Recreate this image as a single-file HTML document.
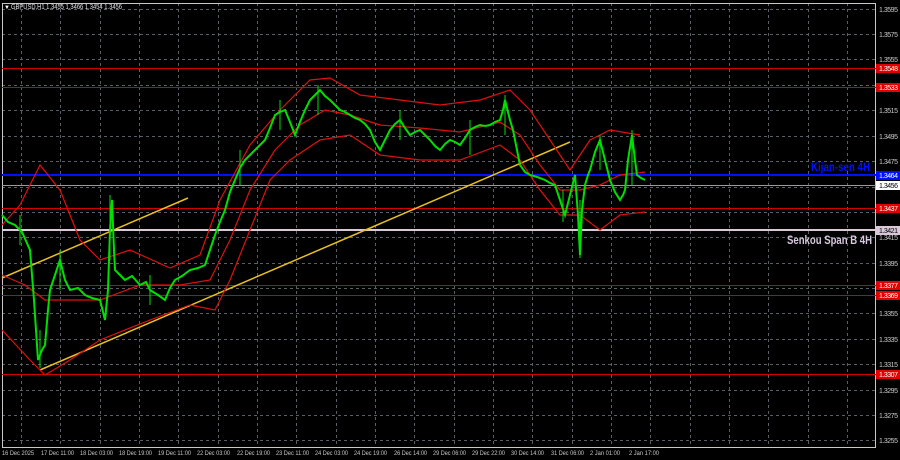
<!DOCTYPE html>
<html><head><style>
body{margin:0;background:#000;width:900px;height:460px;overflow:hidden;font-family:"Liberation Sans",sans-serif}
</style></head><body>
<svg width="900" height="460" xmlns="http://www.w3.org/2000/svg" style="position:absolute;left:0;top:0">
<rect width="900" height="460" fill="#000"/>
<g stroke="#5a5f66" stroke-width="1" stroke-dasharray="3,3">
<line x1="2" y1="9.5" x2="876" y2="9.5"/><line x1="2" y1="34.5" x2="876" y2="34.5"/><line x1="2" y1="59.5" x2="876" y2="59.5"/><line x1="2" y1="85.5" x2="876" y2="85.5"/><line x1="2" y1="110.5" x2="876" y2="110.5"/><line x1="2" y1="136.5" x2="876" y2="136.5"/><line x1="2" y1="161.5" x2="876" y2="161.5"/><line x1="2" y1="187.5" x2="876" y2="187.5"/><line x1="2" y1="212.5" x2="876" y2="212.5"/><line x1="2" y1="237.5" x2="876" y2="237.5"/><line x1="2" y1="263.5" x2="876" y2="263.5"/><line x1="2" y1="288.5" x2="876" y2="288.5"/><line x1="2" y1="313.5" x2="876" y2="313.5"/><line x1="2" y1="339.5" x2="876" y2="339.5"/><line x1="2" y1="364.5" x2="876" y2="364.5"/><line x1="2" y1="390.5" x2="876" y2="390.5"/><line x1="2" y1="415.5" x2="876" y2="415.5"/><line x1="2" y1="440.5" x2="876" y2="440.5"/>
<line x1="21.5" y1="3" x2="21.5" y2="447"/><line x1="60.5" y1="3" x2="60.5" y2="447"/><line x1="100.5" y1="3" x2="100.5" y2="447"/><line x1="139.5" y1="3" x2="139.5" y2="447"/><line x1="178.5" y1="3" x2="178.5" y2="447"/><line x1="218.5" y1="3" x2="218.5" y2="447"/><line x1="257.5" y1="3" x2="257.5" y2="447"/><line x1="296.5" y1="3" x2="296.5" y2="447"/><line x1="336.5" y1="3" x2="336.5" y2="447"/><line x1="375.5" y1="3" x2="375.5" y2="447"/><line x1="414.5" y1="3" x2="414.5" y2="447"/><line x1="454.5" y1="3" x2="454.5" y2="447"/><line x1="493.5" y1="3" x2="493.5" y2="447"/><line x1="532.5" y1="3" x2="532.5" y2="447"/><line x1="572.5" y1="3" x2="572.5" y2="447"/><line x1="611.5" y1="3" x2="611.5" y2="447"/><line x1="650.5" y1="3" x2="650.5" y2="447"/><line x1="690.5" y1="3" x2="690.5" y2="447"/><line x1="729.5" y1="3" x2="729.5" y2="447"/><line x1="768.5" y1="3" x2="768.5" y2="447"/><line x1="808.5" y1="3" x2="808.5" y2="447"/><line x1="847.5" y1="3" x2="847.5" y2="447"/>
</g>
<rect x="2.5" y="3.5" width="873" height="444" fill="none" stroke="#c8c8c8"/>
<line x1="2" y1="68.5" x2="876" y2="68.5" stroke="#d00000"/>
<line x1="2" y1="87.5" x2="876" y2="87.5" stroke="#d00000"/>
<line x1="2" y1="208.5" x2="876" y2="208.5" stroke="#d00000"/>
<line x1="2" y1="285.5" x2="876" y2="285.5" stroke="#d00000"/>
<line x1="2" y1="295.5" x2="876" y2="295.5" stroke="#d00000"/>
<line x1="2" y1="374.5" x2="876" y2="374.5" stroke="#d00000"/>
<line x1="2" y1="185.5" x2="876" y2="185.5" stroke="#9a9a9a"/>
<line x1="2" y1="175" x2="876" y2="175" stroke="#0010ff" stroke-width="2"/>
<line x1="2" y1="230" x2="876" y2="230" stroke="#d8c8d8" stroke-width="2"/>
<line x1="2" y1="278" x2="188" y2="198" stroke="#e8c020" stroke-width="1.5"/>
<line x1="40" y1="370" x2="570" y2="142" stroke="#e8c020" stroke-width="1.5"/>
<g fill="none" stroke="#e01010" stroke-width="1.2">
<polyline points="2,225 20,205 40,165 60,190 80,240 100,260 130,250 170,268 200,255 220,200 250,145 280,110 310,80 330,78 360,95 400,100 440,105 480,100 510,90 530,110 550,140 570,170 590,140 610,130 640,135"/>
<polyline points="2,330 30,360 45,375 70,360 100,340 150,320 190,305 215,310 230,280 250,230 270,180 290,160 320,140 350,135 380,155 420,160 460,160 500,145 520,160 540,190 560,215 580,215 600,230 620,215 645,212"/>
<polyline points="2,275 25,285 45,300 70,300 100,300 140,285 180,285 210,280 230,240 250,190 275,150 300,125 325,110 350,115 380,125 420,128 460,132 500,122 520,135 540,165 560,190 580,190 600,185 620,175 645,172"/>
</g>
<polyline fill="none" stroke="#00e000" stroke-width="2" points="2,215 8,222 15,225 22,232 30,250 34,300 38,360 42,350 45,345 48,310 50,290 55,275 60,260 65,280 70,290 78,288 85,295 92,298 100,300 103,312 105,320 108,290 110,230 112,200 114,250 115,270 120,275 125,280 132,276 140,285 146,282 150,290 158,295 165,300 170,288 175,280 182,276 190,270 198,268 205,265 210,250 215,235 220,222 225,210 230,192 235,180 240,168 245,160 250,155 255,150 260,145 265,140 270,128 275,115 280,112 285,110 290,122 295,135 300,122 305,110 310,100 315,95 320,90 325,96 330,100 335,105 340,110 345,112 350,115 355,118 360,120 365,124 370,130 375,142 380,150 385,140 390,130 395,124 400,120 405,128 410,135 415,132 420,130 425,135 430,140 435,146 440,150 445,144 450,140 455,142 460,145 465,138 470,130 475,127 480,125 485,126 490,125 495,122 500,120 503,110 505,100 508,112 510,120 513,130 515,140 518,155 520,165 525,172 530,175 537,177 545,180 550,183 555,185 560,200 565,215 570,195 575,175 578,215 580,255 582,210 585,185 588,175 590,170 595,152 600,140 605,160 610,180 615,192 620,200 623,195 625,190 628,160 632,135 635,160 637,175 641,178 645,180"/>
<g stroke="#00e000" stroke-width="1">
<line x1="20" y1="215" x2="20" y2="245"/><line x1="40" y1="330" x2="40" y2="368"/><line x1="60" y1="250" x2="60" y2="290"/><line x1="110" y1="195" x2="110" y2="260"/><line x1="150" y1="275" x2="150" y2="305"/><line x1="240" y1="150" x2="240" y2="185"/><line x1="280" y1="100" x2="280" y2="130"/><line x1="318" y1="85" x2="318" y2="115"/><line x1="400" y1="110" x2="400" y2="140"/><line x1="470" y1="120" x2="470" y2="155"/><line x1="505" y1="95" x2="505" y2="135"/><line x1="563" y1="190" x2="563" y2="222"/><line x1="580" y1="200" x2="580" y2="258"/><line x1="600" y1="135" x2="600" y2="170"/><line x1="632" y1="130" x2="632" y2="185"/>
</g>
<g font-size="7" fill="#c8c8c8" font-family="Liberation Sans,sans-serif">
<text x="879" y="12" textLength="19">1.3595</text><text x="879" y="37" textLength="19">1.3575</text><text x="879" y="62" textLength="19">1.3555</text><text x="879" y="113" textLength="19">1.3515</text><text x="879" y="139" textLength="19">1.3495</text><text x="879" y="164" textLength="19">1.3475</text><text x="879" y="240" textLength="19">1.3415</text><text x="879" y="266" textLength="19">1.3395</text><text x="879" y="316" textLength="19">1.3355</text><text x="879" y="342" textLength="19">1.3335</text><text x="879" y="367" textLength="19">1.3315</text><text x="879" y="393" textLength="19">1.3295</text><text x="879" y="418" textLength="19">1.3275</text><text x="879" y="443" textLength="19">1.3255</text>
</g>
<g font-size="7" font-family="Liberation Sans,sans-serif">
<rect x="876" y="64" width="24" height="9" fill="#e00000"/><text x="879" y="71" fill="#fff" textLength="19">1.3548</text>
<rect x="876" y="83" width="24" height="9" fill="#e00000"/><text x="879" y="90" fill="#fff" textLength="19">1.3533</text>
<rect x="876" y="171" width="24" height="9" fill="#0010ff"/><text x="879" y="178" fill="#fff" textLength="19">1.3464</text>
<rect x="876" y="181" width="24" height="9" fill="#fff"/><text x="879" y="188" fill="#000" textLength="19">1.3456</text>
<rect x="876" y="204" width="24" height="9" fill="#e00000"/><text x="879" y="211" fill="#fff" textLength="19">1.3437</text>
<rect x="876" y="226" width="24" height="9" fill="#d8c8d8"/><text x="879" y="233" fill="#000" textLength="19">1.3421</text>
<rect x="876" y="281" width="24" height="9" fill="#e00000"/><text x="879" y="288" fill="#fff" textLength="19">1.3377</text>
<rect x="876" y="291" width="24" height="9" fill="#e00000"/><text x="879" y="298" fill="#fff" textLength="19">1.3369</text>
<rect x="876" y="370" width="24" height="9" fill="#e00000"/><text x="879" y="377" fill="#fff" textLength="19">1.3307</text>
</g>
<text x="811" y="171" font-size="12" font-weight="bold" fill="#0010ff" textLength="59" lengthAdjust="spacingAndGlyphs">Kijan-sen 4H</text>
<text x="787" y="244" font-size="12" font-weight="bold" fill="#d8c8e0" textLength="85" lengthAdjust="spacingAndGlyphs">Senkou Span B 4H</text>
<text x="4" y="9" font-size="6" fill="#fff">▼</text>
<text x="11" y="9" font-size="7" fill="#e0e0e0" textLength="111" lengthAdjust="spacingAndGlyphs">GBPUSD,H1  1.3455 1.3466 1.3454 1.3456</text>
<g font-size="6.5" fill="#c8c8c8">
<text x="2" y="455" textLength="32" lengthAdjust="spacingAndGlyphs">16 Dec 2025</text><text x="41" y="455" textLength="33" lengthAdjust="spacingAndGlyphs">17 Dec 11:00</text><text x="80" y="455" textLength="33" lengthAdjust="spacingAndGlyphs">18 Dec 03:00</text><text x="119" y="455" textLength="33" lengthAdjust="spacingAndGlyphs">18 Dec 19:00</text><text x="158" y="455" textLength="33" lengthAdjust="spacingAndGlyphs">19 Dec 11:00</text><text x="197" y="455" textLength="33" lengthAdjust="spacingAndGlyphs">22 Dec 03:00</text><text x="237" y="455" textLength="33" lengthAdjust="spacingAndGlyphs">22 Dec 19:00</text><text x="276" y="455" textLength="33" lengthAdjust="spacingAndGlyphs">23 Dec 11:00</text><text x="315" y="455" textLength="33" lengthAdjust="spacingAndGlyphs">24 Dec 03:00</text><text x="354" y="455" textLength="33" lengthAdjust="spacingAndGlyphs">24 Dec 19:00</text><text x="394" y="455" textLength="33" lengthAdjust="spacingAndGlyphs">26 Dec 14:00</text><text x="433" y="455" textLength="33" lengthAdjust="spacingAndGlyphs">29 Dec 06:00</text><text x="472" y="455" textLength="33" lengthAdjust="spacingAndGlyphs">29 Dec 22:00</text><text x="511" y="455" textLength="33" lengthAdjust="spacingAndGlyphs">30 Dec 14:00</text><text x="551" y="455" textLength="33" lengthAdjust="spacingAndGlyphs">31 Dec 06:00</text><text x="590" y="455" textLength="30" lengthAdjust="spacingAndGlyphs">2 Jan 01:00</text><text x="629" y="455" textLength="30" lengthAdjust="spacingAndGlyphs">2 Jan 17:00</text>
</g>
</svg>
</body></html>
